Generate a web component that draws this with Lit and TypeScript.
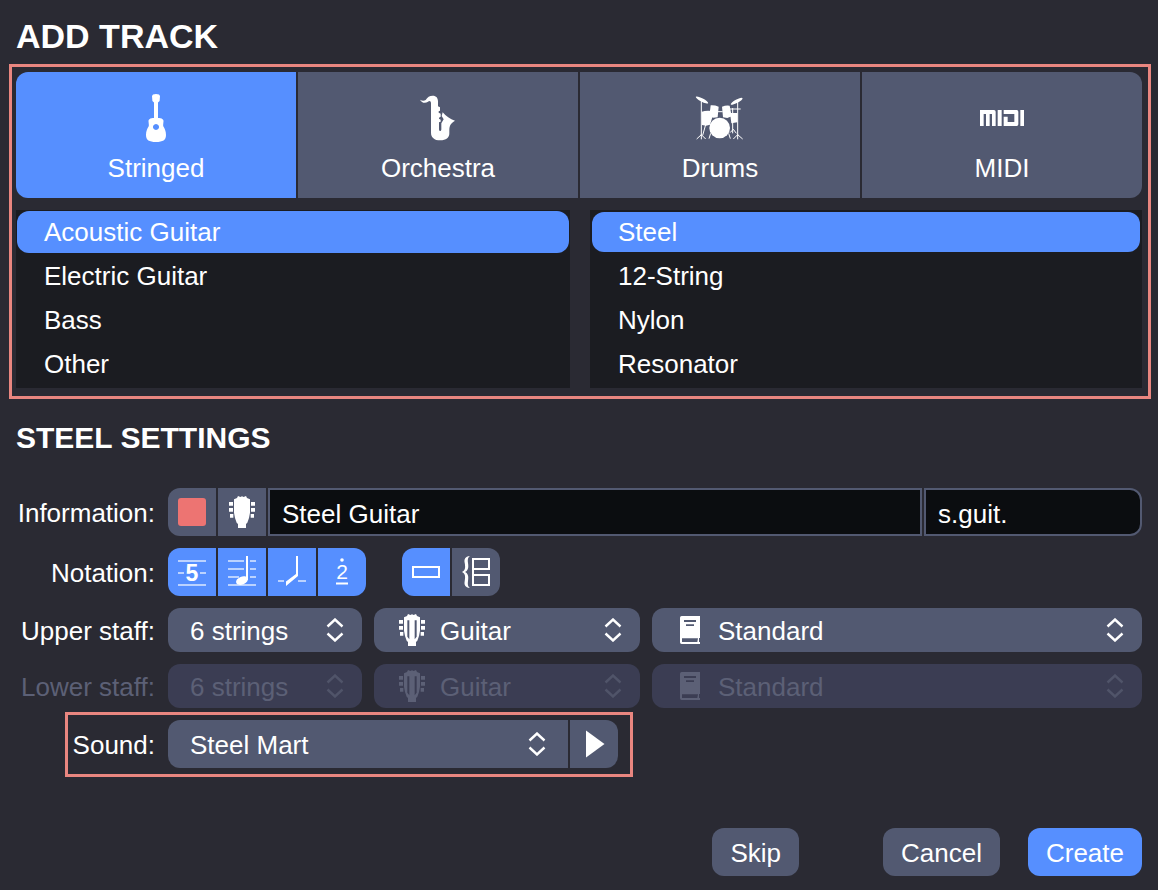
import { LitElement, html, css, svg, nothing, TemplateResult } from "lit";
import { customElement, property, state } from "lit/decorators.js";
import { classMap } from "lit/directives/class-map.js";

const headBody =
  "M18 10L27 6L30 0L37 3L42 1L47 3L54 0L57 6L66 10V50L63 66L58 80L54 84V96H30V84L26 80L21 66L18 50Z";
const pegs = svg`<path d="M3 18h12v11H3zM3 36h12v11H3zM6 54h10v11H6zM69 18h12v11H69zM69 36h12v11H69zM68 54h10v11H68z"/>`;

const icons: Record<string, TemplateResult> = {
  guitar: html`<svg class="tab-icon" viewBox="-18 0 56 48" aria-hidden="true">
    <path fill-rule="evenodd" d="M7 0.6Q10-.6 13 .6L14 2L13.6 7L12 8.5V24C14 23.6 16.4 24.2 17.3 26C18 28 16.6 30.5 17.4 32.5C18.6 34.5 20 37 20 41C20 46 17 48 10 48C3 48 0 46 0 41C0 37 1.4 34.5 2.6 32.5C3.4 30.5 2 28 2.7 26C3.6 24.2 6 23.6 8 24V8.5L6.4 7L6 2ZM10 30a3 3 0 1 0 .01 0Z"/>
  </svg>`,
  sax: html`<svg class="tab-icon" viewBox="30 42 168 144" aria-hidden="true">
    <path d="M60 59C66 63 72 63 77 60C82 51 89 47 98 47C109 47 114 54 114 64V79L120 82V92L116 94V98L122 101V110L117 113V116L122 119V125L117 127V148C117 155 124 155 124 148V130L131 118L125 108L128 97C138 109 150 117 165 122C152 129 148 138 148 150V160C148 174 138 181 121 181C103 181 93 172 93 158V70C93 63 88 61 84 65C76 71 65 69 60 59Z"/>
  </svg>`,
  drums: html`<svg class="tab-icon" viewBox="36 42 168 144" aria-hidden="true">
    <ellipse cx="66" cy="60" rx="21" ry="5" transform="rotate(28 66 60)"/>
    <ellipse cx="170" cy="64" rx="20" ry="5" transform="rotate(-28 170 64)"/>
    <path d="M92 76Q104 75 116 80L113 112L100 113L88 109ZM126 80Q138 75 149 77L155 109L142 114L129 112ZM65 95Q78 91 95 93L97 112L90 134L78 137L66 135ZM150 98L172 99V127L154 130Z"/>
    <circle cx="119" cy="144" r="31"/>
    <path class="line" d="M64 62V166M50 177L64 164L77 177M64 164V178M173 62V166M160 177L173 164L188 177M173 164V178M77 134L68 166M92 160L87 176M146 160L151 176M148 87H182M158 84V160M150 158L160 148L169 160M114 95H128"/>
  </svg>`,
  midi: html`<svg class="tab-icon" viewBox="42 12 168 144" aria-hidden="true">
    <path d="M60 60H102Q107 60 107 65V108H96V72H89V108H78V72H71V108H60ZM113 60H125V108H113ZM131 60H170Q175 60 175 65V103Q175 108 170 108H131V80H143V96H163V72H131ZM181 60H192V108H181Z"/>
  </svg>`,
  head: html`<svg class="head" viewBox="0 0 84 96" aria-hidden="true"><path d=${headBody}/>${pegs}</svg>`,
  slotted: html`<svg class="head" viewBox="0 0 84 96" aria-hidden="true">
    <path fill-rule="evenodd" d="${headBody}M28 19V68L34 76V19ZM50 19V76L56 68V19Z"/>${pegs}
  </svg>`,
  book: html`<svg class="book" viewBox="0 0 60 84" aria-hidden="true">
    <path fill-rule="evenodd" d="M5 0H60V66H57V78H60V84H5Q0 84 0 79V5Q0 0 5 0ZM12 12V18H48V12ZM18 25V30H42V25ZM6 67V78H52L54 67Z"/>
  </svg>`,
  tab: html`<svg class="glyph" viewBox="0 0 48 48" aria-hidden="true">
    <path class="faint" d="M10 13H38M10 25H16M32 25H38M10 37H38"/>
    <text class="five" x="24" y="33" text-anchor="middle">5</text>
  </svg>`,
  note: html`<svg class="glyph" viewBox="0 0 48 48" aria-hidden="true">
    <path class="faint" d="M10 13H26M32 13H38M10 21H26M32 21H38M10 29H21M32 29H38M10 37H38"/>
    <ellipse cx="24" cy="32.6" rx="6.2" ry="4" transform="rotate(-22 24 32.6)"/>
    <path d="M28 8H30V32H28Z"/>
  </svg>`,
  slash: html`<svg class="glyph" viewBox="0 0 48 48" aria-hidden="true">
    <path class="faint" d="M10 33H16M30 33H38"/>
    <path d="M28 8H30V28L18 38V33.5L28 26Z"/>
  </svg>`,
  number: html`<svg class="glyph" viewBox="0 0 48 48" aria-hidden="true">
    <circle cx="24" cy="12" r="1.8"/>
    <text class="two" x="24" y="31" text-anchor="middle">2</text>
    <path d="M18 34.5H30V36.5H18Z"/>
  </svg>`,
  single: html`<svg class="glyph" viewBox="0 0 48 48" aria-hidden="true">
    <path class="stroke" d="M11 19H37V29H11Z"/>
  </svg>`,
  grand: html`<svg class="glyph" viewBox="0 0 48 48" aria-hidden="true">
    <path class="stroke" d="M21 11H37V21H21ZM21 27H37V37H21ZM21 21V27"/>
    <path d="M18 8C13 8.500 12 11 12.700 15C13.500 19.500 13.500 22 10 24C13.500 26 13.500 28.500 12.700 33C12 37 13 39.500 18 40C16 38.500 15.500 37 16 33C16.800 28 16 25.500 13 24C16 22.500 16.800 20 16 15C15.500 11 16 9.500 18 8Z"/>
  </svg>`,
  play: html`<svg class="glyph" viewBox="0 0 48 48" aria-hidden="true"><path d="M16 10.500L34.500 24L16 37.500Z"/></svg>`,
};

@customElement("track-select")
export class TrackSelect extends LitElement {
  @property() label = "";
  @property() value = "";
  @property() icon = "";
  @property({ type: Boolean }) disabled = false;
  @property({ type: Boolean }) joined = false;

  static styles = css`
    :host { display: grid; min-width: 0; }
    .wrap { display: grid; align-items: center; color: #fff; }
    .wrap > * { grid-area: 1 / 1; }
    select {
      appearance: none; width: 100%; height: 44px; box-sizing: border-box; margin: 0;
      padding: 2px 48px 0 22px; border: 0; border-radius: 12px;
      background: #525971; color: inherit; opacity: 1;
      font: 26px "Liberation Sans", Arial, sans-serif;
    }
    .iconic select { padding-left: 66px; }
    .joined select { height: 48px; border-radius: 12px 0 0 12px; }
    .disabled { color: #5c6076; }
    .disabled select { background: #3b3d53; }
    svg { pointer-events: none; fill: currentColor; }
    .lead { width: 28px; margin-left: 24px; display: grid; place-items: center; pointer-events: none; }
    .head { width: 28px; height: 32px; }
    .book { width: 20px; height: 28px; }
    .chevrons { justify-self: end; width: 18px; height: 24px; margin-right: 18px; fill: none; stroke: currentColor; stroke-width: 2.4; }
    .disabled .chevrons { stroke: #505469; }
    .joined .chevrons { margin-right: 22px; }
  `;

  render() {
    const cls = { wrap: true, iconic: !!this.icon, joined: this.joined, disabled: this.disabled };
    return html`<div class=${classMap(cls)}>
      <select aria-label=${this.label} ?disabled=${this.disabled}><option>${this.value}</option></select>
      ${this.icon ? html`<span class="lead">${icons[this.icon]}</span>` : nothing}
      <svg class="chevrons" viewBox="0 0 18 24" aria-hidden="true"><path d="M1.500 8.500L9 1.500L16.500 8.500M1.500 15.500L9 22.500L16.500 15.500"/></svg>
    </div>`;
  }
}

@customElement("app-root")
export class AppRoot extends LitElement {
  @state() private family = "Stringed";
  @state() private instrument = "Acoustic Guitar";
  @state() private variant = "Steel";
  @state() private notations = ["tab", "note", "slash", "number"];
  @state() private staff = "single";

  static styles = css`
    :host {
      display: flex; flex-direction: column; box-sizing: border-box; min-height: 100vh;
      padding: 16px 0 14px; background: #2a2a33; color: #fff;
      font: 26px/32px "Liberation Sans", Arial, sans-serif;
    }
    button { border: 0; margin: 0; padding: 0; font: inherit; color: inherit; background: #525971; }
    button.on { background: #568fff; }
    svg { display: block; fill: currentColor; }
    h1, h2 { margin: 0 16px; font-weight: 700; }
    h1 { font-size: 34px; line-height: 40px; }
    h2 { font-size: 30px; line-height: 36px; margin-top: 21px; }

    .picker { margin: 8px 7px 0 9px; padding: 5px 6px 8px 4px; border: 3px solid #e98680; display: grid; gap: 12px; }
    .tabs { display: grid; grid-template-columns: repeat(4, 1fr); gap: 2px; border-radius: 12px; overflow: hidden; }
    .tabs button { display: flex; flex-direction: column; align-items: center; gap: 10px; padding: 22px 0 14px; }
    .tab-icon { width: 56px; height: 48px; }
    .line { fill: none; stroke: currentColor; stroke-width: 3; }

    .lists { display: grid; grid-template-columns: 277fr 276fr; gap: 20px; }
    ul { list-style: none; margin: 0; padding: 0 0 2px; background: #1b1c21; }
    li { display: grid; height: 44px; padding: 1px; box-sizing: border-box; }
    .inset li { padding: 2px; }
    li button { text-align: left; padding: 0 27px; border-radius: 12px; background: none; }
    .inset button { padding: 0 26px; }

    form { margin: 32px 16px 0; display: grid; gap: 12px; }
    .row { display: grid; grid-template-columns: 139px minmax(0, 1fr); gap: 13px; align-items: center; }
    .label { text-align: right; white-space: nowrap; padding-top: 2px; }
    .dim { color: #5c6076; }
    .info { display: grid; grid-template-columns: 48px 48px minmax(0, 3fr) minmax(0, 1fr); gap: 2px; }
    .info button, .group button, .play { display: grid; place-items: center; width: 48px; height: 48px; }
    .first { border-radius: 12px 0 0 12px; }
    .swatch { width: 28px; height: 28px; border-radius: 3px; background: #ed7472; }
    .head { width: 28px; height: 32px; }
    input {
      min-width: 0; height: 48px; box-sizing: border-box; margin: 0; padding: 4px 12px 0;
      border: 2px solid #525971; border-radius: 0; background: #0b0d10; color: #fff; font: inherit;
    }
    .last { border-radius: 0 12px 12px 0; }
    .groups { display: flex; gap: 36px; }
    .group { display: flex; gap: 2px; border-radius: 12px; overflow: hidden; }
    .glyph { width: 48px; height: 48px; }
    .faint { fill: none; stroke: #fff; stroke-opacity: 0.6; stroke-width: 2; }
    .stroke { fill: none; stroke: #fff; stroke-width: 2; }
    .five { font: 700 23px "Liberation Sans", Arial, sans-serif; }
    .two { font: 21px "Liberation Sans", Arial, sans-serif; }
    .selects { display: grid; grid-template-columns: 194px 266px minmax(0, 1fr); gap: 12px; }
    .sound { position: relative; justify-self: start; grid-template-columns: 139px 450px; }
    .sound::after { content: ""; position: absolute; inset: -8px -15px -9px 49px; border: 3px solid #e98680; pointer-events: none; }
    .player { display: grid; grid-template-columns: minmax(0, 1fr) 48px; gap: 2px; }

    footer { margin: auto 16px 0; display: flex; justify-content: flex-end; gap: 28px; }
    footer button { height: 48px; padding: 2px 18px 0; border-radius: 12px; }
    .skip { margin-right: 56px; }
  `;

  private toggle(id: string) {
    this.notations = this.notations.includes(id)
      ? this.notations.filter((n) => n !== id)
      : [...this.notations, id];
  }

  private list(items: string[], current: string, pick: (v: string) => void, inset: boolean, name: string) {
    return html`<ul class=${classMap({ inset })} aria-label=${name}>
      ${items.map((item) => html`<li>
        <button type="button" class=${classMap({ on: item === current })} aria-pressed=${item === current}
          @click=${() => pick(item)}>${item}</button>
      </li>`)}
    </ul>`;
  }

  private staffRow(label: string, disabled: boolean) {
    return html`<div class="row">
      <span class=${classMap({ label: true, dim: disabled })}>${label}:</span>
      <div class="selects">
        <track-select label="${label} strings" value="6 strings" ?disabled=${disabled}></track-select>
        <track-select label="${label} instrument" value="Guitar" icon="slotted" ?disabled=${disabled}></track-select>
        <track-select label="${label} tuning" value="Standard" icon="book" ?disabled=${disabled}></track-select>
      </div>
    </div>`;
  }

  render() {
    const tabs = [["Stringed", "guitar"], ["Orchestra", "sax"], ["Drums", "drums"], ["MIDI", "midi"]];
    const notation = [["tab", "Tablature"], ["note", "Standard notation"], ["slash", "Slash"], ["number", "Numbered"]];
    const staves = [["single", "Single staff"], ["grand", "Grand staff"]];
    return html`
      <h1>ADD TRACK</h1>
      <section class="picker">
        <div class="tabs">
          ${tabs.map(([name, icon]) => html`<button type="button" class=${classMap({ on: name === this.family })}
            aria-pressed=${name === this.family} @click=${() => (this.family = name)}>${icons[icon]}<span>${name}</span></button>`)}
        </div>
        <div class="lists">
          ${this.list(["Acoustic Guitar", "Electric Guitar", "Bass", "Other"], this.instrument, (v) => (this.instrument = v), false, "Instrument")}
          ${this.list(["Steel", "12-String", "Nylon", "Resonator"], this.variant, (v) => (this.variant = v), true, "Variant")}
        </div>
      </section>
      <h2>STEEL SETTINGS</h2>
      <form @submit=${(e: Event) => e.preventDefault()}>
        <div class="row">
          <label class="label" for="name">Information:</label>
          <div class="info">
            <button type="button" class="first" aria-label="Track colour"><span class="swatch"></span></button>
            <button type="button" aria-label="Track icon">${icons.head}</button>
            <input id="name" .value=${"Steel Guitar"} />
            <input class="last" aria-label="Short name" .value=${"s.guit."} />
          </div>
        </div>
        <div class="row">
          <span class="label">Notation:</span>
          <div class="groups">
            <div class="group">
              ${notation.map(([id, name]) => html`<button type="button" aria-label=${name} aria-pressed=${this.notations.includes(id)}
                class=${classMap({ on: this.notations.includes(id) })} @click=${() => this.toggle(id)}>${icons[id]}</button>`)}
            </div>
            <div class="group">
              ${staves.map(([id, name]) => html`<button type="button" aria-label=${name} aria-pressed=${this.staff === id}
                class=${classMap({ on: this.staff === id })} @click=${() => (this.staff = id)}>${icons[id]}</button>`)}
            </div>
          </div>
        </div>
        ${this.staffRow("Upper staff", false)}
        ${this.staffRow("Lower staff", true)}
        <div class="row sound">
          <span class="label">Sound:</span>
          <div class="player">
            <track-select label="Sound" value="Steel Mart" joined></track-select>
            <button type="button" class="play last" aria-label="Play sound">${icons.play}</button>
          </div>
        </div>
      </form>
      <footer>
        <button type="button" class="skip">Skip</button>
        <button type="button">Cancel</button>
        <button type="button" class="on">Create</button>
      </footer>
    `;
  }
}
